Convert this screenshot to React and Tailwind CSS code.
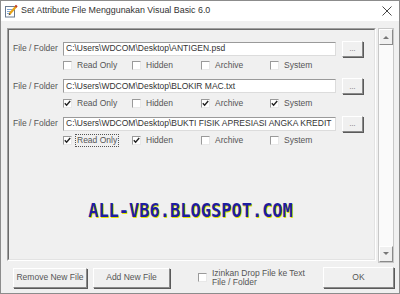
import React from 'react'

// Set Attribute File — tiruan jendela VB6 klasik

const ROWS = [
  { path: 'C:\\Users\\WDCOM\\Desktop\\ANTIGEN.psd', attrs: [false, false, false, false] },
  { path: 'C:\\Users\\WDCOM\\Desktop\\BLOKIR MAC.txt', attrs: [true, false, true, true] },
  { path: 'C:\\Users\\WDCOM\\Desktop\\BUKTI FISIK APRESIASI ANGKA KREDIT', attrs: [true, true, false, false], focus: 0 },
]

const ATTR_LABELS = ['Read Only', 'Hidden', 'Archive', 'System']

function CheckBox({ checked }) {
  return (
    <span className="w-[9px] h-[9px] shrink-0 bg-white border border-[#9a9a9a] border-b-[#e8e8e8] border-r-[#e8e8e8] flex items-center justify-center">
      {checked && (
        <svg width="7" height="7" viewBox="0 0 7 7">
          <polyline points="0.8,3.2 2.6,5.2 6.2,1" fill="none" stroke="#222" strokeWidth="1.4" />
        </svg>
      )}
    </span>
  )
}

function RaisedButton({ children, className = '' }) {
  return (
    <div className={`bg-[#f0f0f0] border border-white border-b-[#8a8a8a] border-r-[#8a8a8a] shadow-[1px_1px_0_#5a5a5a] flex items-center justify-center text-[#555] ${className}`}>
      {children}
    </div>
  )
}

function FileRow({ row }) {
  return (
    <div className="flex flex-col">
      <div className="flex items-center h-[17px]">
        <span className="w-[50px] text-[#555]">File / Folder</span>
        <div className="w-[273px] h-[14px] bg-white border border-[#9a9a9a] border-b-[#dcdcdc] border-r-[#dcdcdc] flex items-center px-[2px] overflow-hidden whitespace-nowrap text-[#333]">
          {row.path}
        </div>
        <RaisedButton className="ml-[6px] w-[21px] h-[16px] text-[7px] leading-none">...</RaisedButton>
      </div>
      <div className="flex items-center h-[11px] mt-[3px] pl-[50px]">
        {ATTR_LABELS.map((label, i) => (
          <div key={label} className="w-[69px] flex items-center gap-[5px]">
            <CheckBox checked={row.attrs[i]} />
            <span className={`text-[#555] leading-none ${row.focus === i ? 'outline-1 outline-dotted outline-[#555] outline-offset-[1px]' : ''}`}>{label}</span>
          </div>
        ))}
      </div>
    </div>
  )
}

export default function App() {
  return (
    <div className="w-[400px] h-[294px] bg-[#f0f0f0] border border-[#8c8c8c] flex flex-col text-[8.5px] font-['Liberation_Sans',Arial,sans-serif]">
      {/* title bar */}
      <div className="h-[20px] bg-white flex items-center shrink-0">
        <svg width="14" height="14" viewBox="0 0 14 14" className="ml-[3px]">
          <rect x="1.5" y="2.5" width="9" height="10.5" fill="#fff" stroke="#6b7a8f" />
          <line x1="3" y1="5.5" x2="8.5" y2="5.5" stroke="#7fa6d6" />
          <line x1="3" y1="7.5" x2="8.5" y2="7.5" stroke="#7fa6d6" />
          <line x1="3" y1="9.5" x2="7" y2="9.5" stroke="#7fa6d6" />
          <line x1="5.5" y1="10" x2="12.5" y2="2" stroke="#e8a317" strokeWidth="2.2" />
          <line x1="11.5" y1="3" x2="12.8" y2="1.6" stroke="#c0392b" strokeWidth="2.2" />
          <polygon points="4.6,11.2 5.2,9.2 6.6,10.4" fill="#333" />
        </svg>
        <span className="ml-[3px] text-[8.9px] text-[#333]">Set Attribute File Menggunakan Visual Basic 6.0</span>
        <svg width="10" height="10" viewBox="0 0 10 10" className="ml-auto mr-[7px]">
          <line x1="0.5" y1="0.5" x2="9.5" y2="9.5" stroke="#333" strokeWidth="0.9" />
          <line x1="9.5" y1="0.5" x2="0.5" y2="9.5" stroke="#333" strokeWidth="0.9" />
        </svg>
      </div>

      {/* body */}
      <div className="flex-1 flex flex-col pt-[7px] pl-[6px] pr-[5px]">
        <div className="flex h-[235px] gap-[2px]">
          {/* frame */}
          <div className="flex-1 h-[233px] border border-[#a0a0a0] border-b-white border-r-white">
            <div className="h-full border border-[#6a6a6a] border-b-[#e3e3e3] border-r-[#e3e3e3] flex flex-col pl-[4px] pt-[10px]">
              <div className="flex flex-col gap-[6.5px]">
                {ROWS.map((r, i) => <FileRow key={i} row={r} />)}
              </div>
              <div className="mt-[56px] text-center font-['DejaVu_Sans_Mono',monospace] font-bold text-[17px] leading-none text-[#1e1ea0] [text-shadow:1px_1px_0_#e4e400] scale-y-[1.1] pr-[6px]">
                ALL-VB6.BLOGSPOT.COM
              </div>
            </div>
          </div>
          {/* scrollbar */}
          <div className="w-[16px] h-[235px] bg-[#fafafa] border border-[#c8c8c8] flex flex-col justify-between">
            <RaisedButton className="h-[16px] shadow-none">
              <svg width="6" height="4" viewBox="0 0 6 4"><polygon points="0,4 3,1 6,4" fill="#777" /></svg>
            </RaisedButton>
            <RaisedButton className="h-[16px] shadow-none">
              <svg width="6" height="4" viewBox="0 0 6 4"><polygon points="0,0 3,3 6,0" fill="#777" /></svg>
            </RaisedButton>
          </div>
        </div>

        {/* bottom row */}
        <div className="flex items-center h-[21px] mt-[4px]">
          <RaisedButton className="ml-[6px] w-[74px] h-[20px]">Remove New File</RaisedButton>
          <RaisedButton className="ml-[6px] w-[77px] h-[20px]">Add New File</RaisedButton>
          <div className="ml-[28px] flex items-center gap-[5px]">
            <CheckBox checked={false} />
            <div className="text-[#555] leading-[9px] w-[100px]">Izinkan Drop File ke Text File / Folder</div>
          </div>
          <RaisedButton className="ml-auto w-[71px] h-[21px]">OK</RaisedButton>
        </div>
      </div>
    </div>
  )
}
